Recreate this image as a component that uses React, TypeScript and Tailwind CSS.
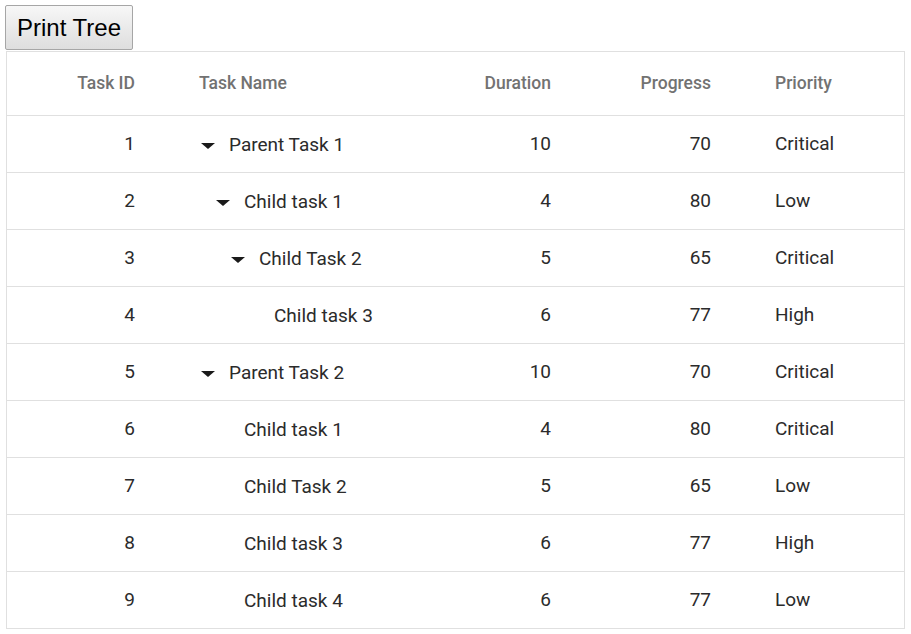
import React from "react";

type Row = { id: number; name: string; level: number; expand: boolean; duration: number; progress: number; priority: string };

const rows: Row[] = [
  { id: 1, name: "Parent Task 1", level: 0, expand: true, duration: 10, progress: 70, priority: "Critical" },
  { id: 2, name: "Child task 1", level: 1, expand: true, duration: 4, progress: 80, priority: "Low" },
  { id: 3, name: "Child Task 2", level: 2, expand: true, duration: 5, progress: 65, priority: "Critical" },
  { id: 4, name: "Child task 3", level: 3, expand: false, duration: 6, progress: 77, priority: "High" },
  { id: 5, name: "Parent Task 2", level: 0, expand: true, duration: 10, progress: 70, priority: "Critical" },
  { id: 6, name: "Child task 1", level: 1, expand: false, duration: 4, progress: 80, priority: "Critical" },
  { id: 7, name: "Child Task 2", level: 1, expand: false, duration: 5, progress: 65, priority: "Low" },
  { id: 8, name: "Child task 3", level: 1, expand: false, duration: 6, progress: 77, priority: "High" },
  { id: 9, name: "Child task 4", level: 1, expand: false, duration: 6, progress: 77, priority: "Low" },
];

const indent = ["pl-[73px]", "pl-[88px]", "pl-[103px]", "pl-[118px]"];

export default function App() {
  return (
    <div className="bg-white min-h-[634px] pt-[5px] pl-[5px] font-['Roboto',sans-serif]">
      <button className="h-[45px] w-[128px] border border-[#a6a6a6] rounded-[2px] bg-gradient-to-b from-[#f7f7f7] to-[#dedede] font-['Liberation_Sans',Arial,sans-serif] text-[24px] text-black leading-none">
        Print Tree
      </button>
      <div className="ml-[1px] mt-[1px] w-[899px] border-l border-r border-t border-[#e0e0e0]">
        <div className="grid grid-cols-[149px_256px_160px_160px_1fr] h-[64px] items-center border-b border-[#e0e0e0] text-[17.5px] font-medium text-[#727272]">
          <div className="text-right pr-[21px]">Task ID</div>
          <div className="pl-[43px]">Task Name</div>
          <div className="text-right pr-[21px]">Duration</div>
          <div className="text-right pr-[21px]">Progress</div>
          <div className="pl-[43px]">Priority</div>
        </div>
        {rows.map((r) => (
          <div
            key={r.id}
            className="grid grid-cols-[149px_256px_160px_160px_1fr] h-[57px] items-center border-b border-[#e0e0e0] text-[19px] text-[#2b2b2b]"
          >
            <div className="text-right pr-[21px]">{r.id}</div>
            <div className={`${indent[r.level]} relative pt-[3px]`}>
              {r.expand && (
                <span className="absolute top-1/2 mt-[-1px] ml-[-28px] w-0 h-0 border-l-[7px] border-r-[7px] border-t-[6px] border-l-transparent border-r-transparent border-t-[#1a1a1a]" />
              )}
              {r.name}
            </div>
            <div className="text-right pr-[21px]">{r.duration}</div>
            <div className="text-right pr-[21px]">{r.progress}</div>
            <div className="pl-[43px]">{r.priority}</div>
          </div>
        ))}
      </div>
    </div>
  );
}
